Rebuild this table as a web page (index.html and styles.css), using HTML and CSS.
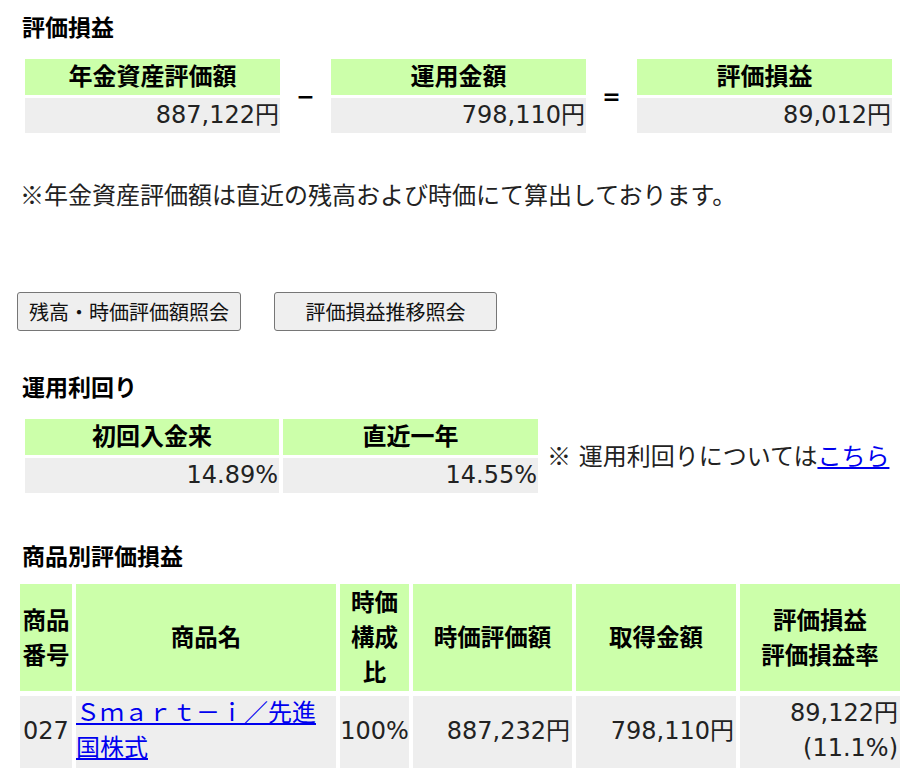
FILE: index.html
```html
<!DOCTYPE html>
<html lang="ja">
<head>
<meta charset="utf-8">
<title>評価損益</title>
<link rel="stylesheet" href="styles.css">
</head>
<body>
<div class="page">
  <h2 class="title title-first">評価損益</h2>
  <div class="summary">
    <div class="box">
      <div class="box-head">年金資産評価額</div>
      <div class="box-val">887,122円</div>
    </div>
    <div class="op">−</div>
    <div class="box">
      <div class="box-head">運用金額</div>
      <div class="box-val">798,110円</div>
    </div>
    <div class="op">=</div>
    <div class="box">
      <div class="box-head">評価損益</div>
      <div class="box-val">89,012円</div>
    </div>
  </div>

  <p class="note"><span class="cjk">※</span>年金資産評価額は直近の残高および時価にて算出しております。</p>

  <div class="buttons">
    <button class="btn btn-1" type="button">残高・時価評価額照会</button>
    <button class="btn btn-2" type="button">評価損益推移照会</button>
  </div>

  <h2 class="title title-yield">運用利回り</h2>
  <div class="yield-row">
    <div class="yield">
      <div class="yh">初回入金来</div>
      <div class="yh">直近一年</div>
      <div class="yv">14.89%</div>
      <div class="yv">14.55%</div>
    </div>
    <p class="yield-note"><span class="cjk">※</span> 運用利回りについては<a href="#">こちら</a></p>
  </div>

  <h2 class="title title-products">商品別評価損益</h2>
  <div class="products">
    <div class="ph">商品番号</div>
    <div class="ph">商品名</div>
    <div class="ph">時価構成比</div>
    <div class="ph">時価評価額</div>
    <div class="ph">取得金額</div>
    <div class="ph">評価損益<br>評価損益率</div>

    <div class="pd pd-code">027</div>
    <div class="pd pd-name"><a href="#">Ｓｍａｒｔ－ｉ／先進国株式</a></div>
    <div class="pd pd-ratio">100%</div>
    <div class="pd pd-num">887,232円</div>
    <div class="pd pd-num">798,110円</div>
    <div class="pd pd-num">89,122円<br>(11.1%)</div>
  </div>
</div>
</body>
</html>
```

FILE: styles.css
```css
* {
  box-sizing: border-box;
}

body {
  margin: 0;
  background: #ffffff;
  color: #222222;
  font-family: "DejaVu Sans", "Noto Sans CJK JP", sans-serif;
  font-size: 24px;
  line-height: 35px;
}

.cjk {
  font-family: "Noto Sans CJK JP", sans-serif;
}

.page {
  padding: 9px 0 0 20px;
  width: 919px;
}

.title {
  margin: 0 0 15px 2px;
  font-size: 23px;
  line-height: 35px;
  font-weight: bold;
  color: #000000;
  font-family: "Noto Sans CJK JP", sans-serif;
}

/* summary */
.summary {
  display: flex;
  align-items: center;
  margin-left: 5px;
}

.box {
  width: 255px;
  display: flex;
  flex-direction: column;
  gap: 3px;
}

.box-head {
  height: 36px;
  background: #ccffaa;
  text-align: center;
  font-weight: bold;
  color: #000000;
  line-height: 36px;
}

.box-val {
  height: 35px;
  background: #eeeeee;
  text-align: right;
  padding-right: 1px;
  line-height: 35px;
}

.op {
  width: 51px;
  text-align: center;
  color: #000000;
  font-weight: bold;
  font-size: 22px;
}

.note {
  margin: 43px 0 0 0;
  height: 35px;
  font-size: 24px;
  line-height: 35px;
}

/* buttons */
.buttons {
  display: flex;
  gap: 33px;
  margin: 81px 0 0 -3px;
}

.btn {
  height: 39px;
  font-family: "Noto Sans CJK JP", sans-serif;
  font-size: 20px;
  color: #111111;
  background: #efefef;
  border: 1px solid #767676;
  border-radius: 3px;
  padding: 0;
}

.btn-1 {
  width: 224px;
}

.btn-2 {
  width: 223px;
}

/* yield */
.title-yield {
  margin-top: 38px;
  margin-bottom: 15px;
}

.yield-row {
  display: flex;
  align-items: center;
  gap: 9px;
  margin-left: 5px;
}

.yield {
  display: grid;
  grid-template-columns: 254px 255px;
  column-gap: 4px;
  row-gap: 3px;
}

.yh {
  height: 36px;
  line-height: 36px;
  background: #ccffaa;
  text-align: center;
  font-weight: bold;
  color: #000000;
}

.yv {
  height: 35px;
  background: #eeeeee;
  text-align: right;
  padding-right: 1px;
}

.yield-note {
  margin: 0;
}

a {
  color: #0000ee;
  text-decoration: underline;
}

/* products */
.title-products {
  margin-top: 45px;
  margin-bottom: 11px;
}

.products {
  display: grid;
  grid-template-columns: 52px 260px 69px 159px 160px 160px;
  column-gap: 4px;
  row-gap: 5px;
}

.ph {
  background: #ccffaa;
  font-weight: bold;
  color: #000000;
  text-align: center;
  padding: 0 2px 2px;
  min-height: 107px;
  display: flex;
  align-items: center;
  justify-content: center;
  font-family: "Noto Sans CJK JP", sans-serif;
  font-size: 23.5px;
}

.pd {
  background: #eeeeee;
  padding: 0 2px 2px;
  min-height: 71px;
  display: flex;
  align-items: center;
}

.pd-code {
  padding-left: 3px;
}

.pd-name {
  padding: 0 0 2px;
}

.pd-ratio {
  justify-content: center;
  padding: 0 0 2px;
}

.pd-num {
  justify-content: flex-end;
  text-align: right;
  padding-right: 2px;
}
```
